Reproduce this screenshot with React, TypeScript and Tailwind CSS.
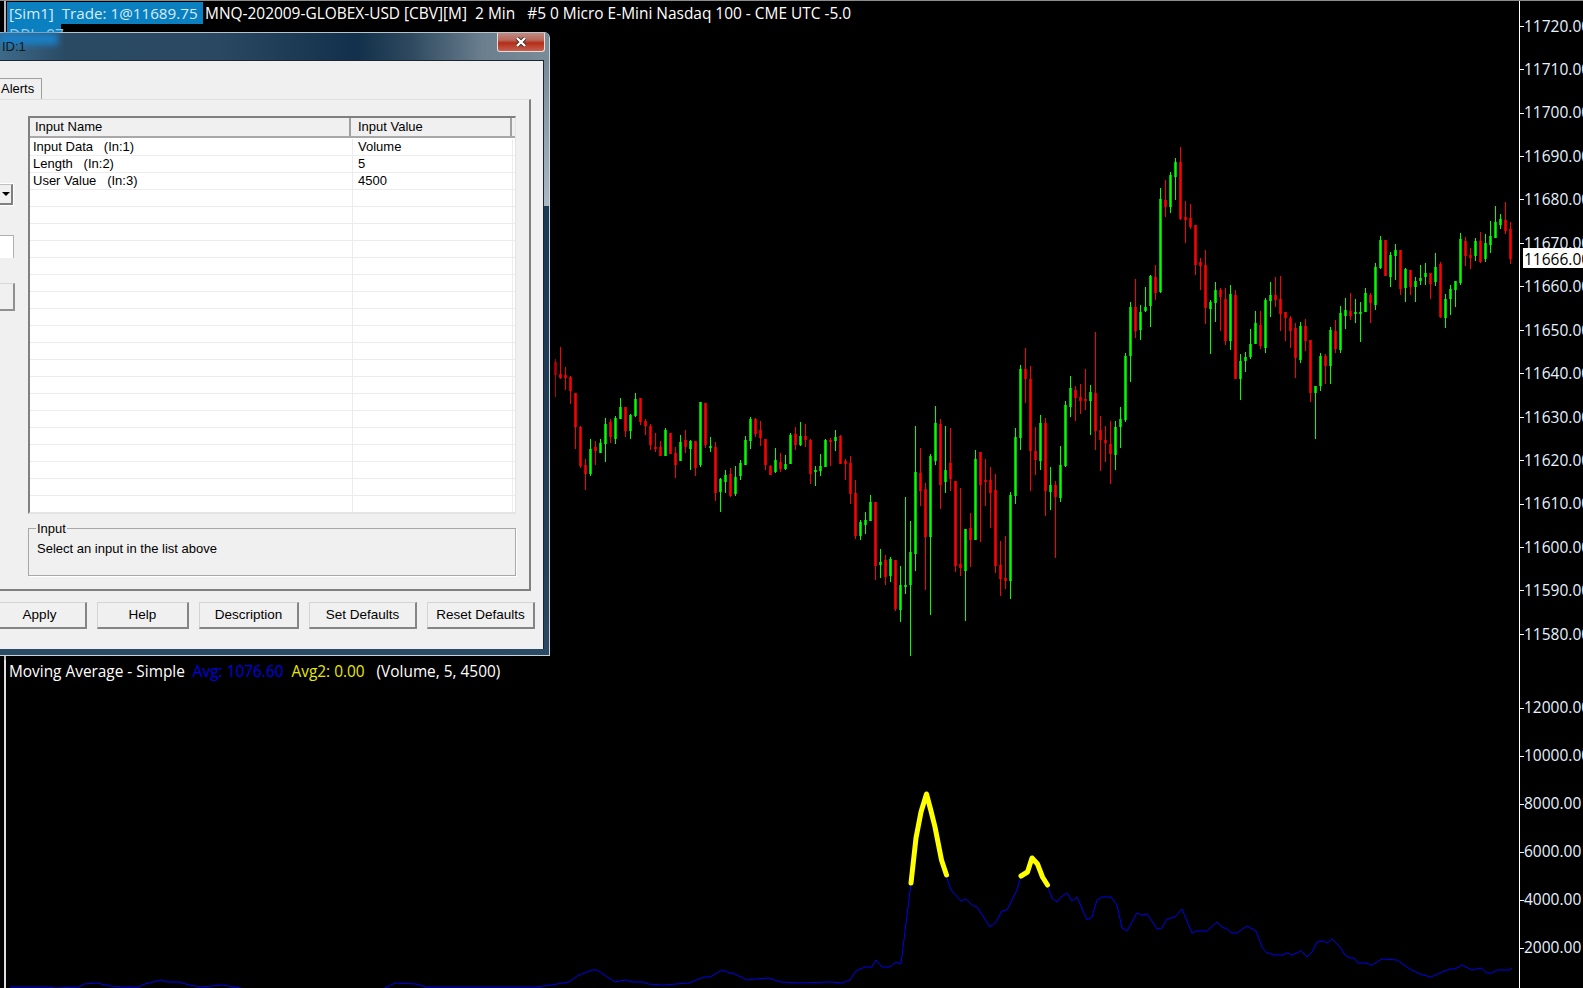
import React from 'react';

type Candle = ['g' | 'r', number, number, number, number];

// [colour, wick top, wick bottom, body top, body bottom], one bar every 5px from x=555
const candles: Candle[] = [
  ['r',359,397,362,375],['r',347,379,374,378],['r',367,390,375,378],['r',376,404,377,391],['r',393,449,393,427],
  ['r',426,468,427,466],['r',459,490,465,474],['g',439,476,449,474],['r',441,465,447,451],['g',439,453,443,453],
  ['g',418,462,424,444],['r',419,443,422,437],['g',416,444,418,439],['g',398,419,407,419],['r',407,437,407,431],
  ['g',414,439,415,431],['g',393,417,399,416],['r',398,425,398,422],['r',419,435,421,426],['r',424,450,426,445],
  ['r',433,452,447,449],['r',441,456,447,456],['g',428,456,430,456],['r',433,454,433,454],['r',447,478,453,465],
  ['g',435,461,442,461],['r',430,453,440,447],['g',440,470,441,449],['r',441,476,441,468],['g',402,467,402,465],
  ['r',403,448,403,445],['g',437,452,446,448],['r',442,501,447,493],['g',478,512,479,492],['g',470,493,475,482],
  ['r',468,497,474,496],['g',466,496,477,494],['g',460,480,463,476],['g',436,465,440,465],['g',417,449,419,441],
  ['r',418,437,419,434],['r',421,446,430,438],['r',439,470,439,465],['r',465,475,466,475],['g',448,473,460,472],
  ['r',453,472,462,469],['g',455,470,464,469],['g',433,464,435,464],['r',427,450,434,445],['g',422,446,436,445],
  ['r',424,447,436,440],['r',439,484,440,474],['g',466,486,470,472],['g',454,476,466,471],['g',439,467,440,467],
  ['r',438,466,440,442],['g',430,451,437,441],['r',435,464,436,464],['r',459,480,461,464],['r',456,504,463,494],
  ['r',480,539,493,536],['g',520,540,522,536],['g',512,534,520,525],['g',495,521,502,521],['r',502,580,502,566],
  ['g',549,578,562,565],['r',555,585,560,577],['g',557,582,559,576],['r',560,611,560,609],['g',566,622,585,610],
  ['g',497,594,585,586],['g',521,656,552,585],['g',426,571,472,554],['r',448,506,473,491],['r',483,590,489,537],
  ['g',454,615,456,537],['g',406,465,423,461],['r',419,509,424,485],['g',426,493,470,482],['r',428,491,463,479],
  ['r',481,572,481,566],['r',488,576,564,568],['g',529,621,529,571],['r',513,567,528,540],['g',450,540,459,540],
  ['r',452,542,452,485],['r',459,506,480,482],['r',467,528,480,493],['r',474,573,490,566],['r',541,596,565,579],
  ['r',536,589,578,581],['g',492,599,495,581],['g',428,504,437,496],['g',365,450,369,438],['r',348,403,369,379],
  ['r',366,491,379,451],['r',427,475,451,460],['g',415,470,423,461],['r',418,516,423,491],['g',467,510,485,492],
  ['r',481,558,485,497],['g',446,502,465,498],['g',401,467,405,466],['g',376,417,388,407],['r',386,421,390,398],
  ['r',384,414,397,401],['r',369,410,399,401],['g',385,435,392,401],['r',332,450,393,431],['r',416,471,430,440],
  ['r',426,462,440,443],['r',421,484,444,454],['g',421,470,427,455],['g',407,448,419,427],['g',353,422,356,420],
  ['g',302,382,307,356],['r',279,338,307,331],['g',305,340,312,330],['g',287,312,307,311],['g',275,327,276,306],
  ['r',265,300,277,293],['g',188,293,199,292],['r',180,217,200,207],['g',172,213,175,207],['g',158,200,162,177],
  ['r',147,220,162,219],['r',201,243,217,220],['r',204,229,218,227],['r',225,275,225,265],['r',258,290,262,266],
  ['r',250,324,265,308],['g',300,354,302,309],['g',282,322,290,303],['r',288,331,290,297],['r',288,345,299,341],
  ['g',285,350,294,341],['r',290,379,295,379],['g',354,400,361,379],['g',352,372,357,361],['g',329,359,344,357],
  ['g',311,344,323,344],['r',311,349,325,346],['g',298,353,300,348],['g',282,317,295,301],['r',277,307,295,300],
  ['r',276,331,299,314],['r',312,341,312,318],['r',316,348,318,331],['r',323,378,328,358],['g',322,363,326,360],
  ['r',319,351,326,341],['r',340,402,340,393],['g',386,439,386,393],['g',353,391,356,386],['r',354,384,356,366],
  ['g',327,384,330,366],['r',320,353,331,349],['g',306,353,313,350],['g',298,329,310,316],['r',293,320,311,316],
  ['g',299,323,312,313],['g',302,342,312,313],['g',288,312,293,312],['r',293,323,295,303],['g',263,310,267,305],
  ['g',236,269,240,268],['r',240,276,240,276],['g',252,287,255,277],['g',244,280,250,256],['r',250,295,250,289],
  ['g',268,302,269,288],['r',270,295,270,287],['g',277,302,281,287],['g',265,285,278,281],['g',263,285,273,277],
  ['r',273,299,273,284],['g',253,286,267,282],['r',262,318,264,317],['g',294,328,299,318],['g',285,315,289,299],
  ['g',281,307,281,290],['g',233,285,239,283],['r',237,266,241,256],['r',248,269,255,258],['g',238,261,241,256],
  ['r',232,263,241,262],['g',234,262,243,259],['g',221,253,236,245],['g',206,238,222,238],['g',214,229,219,225],
  ['r',202,234,220,231],['r',222,264,229,259],
];

// the blue average, broken where the yellow marker was painted over it
const avgLines = [
  '10,987 48,987 55,988 79,987 84,984 97,983 110,986 122,987 138,987 145,984 161,980 168,982 179,982 189,985 201,987 222,985 235,987 245,989 383,989 395,983 416,984 426,987 495,987 536,987 551,985 569,982 577,976 592,970 597,970 615,982 625,980 633,982 643,982 648,984 663,985 689,983 704,977 710,977 722,970 730,973 735,974 747,980 755,979 768,978 781,982 800,983 830,982 842,983 850,980 856,971 865,967 872,967 876,960 882,967 890,967 896,962 901,964 911,883',
  '946,875 951,890 961,901 966,899 972,905 977,907 990,927 996,922 1002,911 1007,910 1017,890 1021,876',
  '1047,885 1052,898 1057,902 1061,897 1067,893 1072,901 1077,897 1087,920 1092,917 1097,900 1102,897 1111,897 1117,905 1122,928 1127,931 1137,913 1142,915 1147,914 1152,921 1157,929 1162,928 1167,919 1175,917 1182,909 1192,933 1197,931 1207,931 1217,922 1222,927 1227,929 1232,933 1237,933 1247,926 1256,931 1262,947 1267,953 1275,955 1282,955 1287,953 1292,955 1301,951 1307,957 1312,952 1317,942 1324,941 1327,943 1332,939 1340,947 1345,955 1350,958 1354,958 1358,963 1366,963 1372,965 1382,959 1397,960 1410,969 1420,974 1431,977 1442,972 1450,969 1455,969 1462,965 1472,970 1481,968 1487,973 1492,973 1497,970 1510,970 1512,968',
];
const markerLines = [
  '911,883 916,838 921,812 926.5,794 931,811 935,827 941.5,860 946.5,875',
  '1021,876 1027.5,872 1032,858 1037.5,864 1042.5,877 1047.5,885',
];

const priceLabels = ['11720.00','11710.00','11700.00','11690.00','11680.00','11670.00','11660.00','11650.00','11640.00','11630.00','11620.00','11610.00','11600.00','11590.00','11580.00'];
const volumeLabels = ['12000.00','10000.00','8000.00','6000.00','4000.00','2000.00'];
const buttons = [
  { label: 'Apply', cls: 'w-[94px]' },
  { label: 'Help', cls: 'w-[92px]' },
  { label: 'Description', cls: 'w-[100px]' },
  { label: 'Set Defaults', cls: 'w-[108px]' },
  { label: 'Reset Defaults', cls: 'w-[108px]' },
];
const inputs: [string, string][] = [
  ['Input Data   (In:1)', 'Volume'],
  ['Length   (In:2)', '5'],
  ['User Value   (In:3)', '4500'],
];

const CandleBars: React.FC = () => (
  <g shapeRendering="crispEdges">
    {candles.map(([c, wt, wb, bt, bb], i) => {
      const x = 555 + i * 5;
      const main = c === 'g' ? '#00ff00' : '#ff0000';
      const edge = c === 'g' ? '#00c000' : '#c80000';
      return (
        <g key={i} opacity={i === 0 ? 0.7 : 1}>
          <rect x={x} y={wt} width={1} height={wb - wt} fill={main} />
          <rect x={x - 1} y={bt} width={3} height={Math.max(bb - bt, 2)} fill={edge} />
          <rect x={x} y={bt} width={1} height={Math.max(bb - bt, 2)} fill={main} />
        </g>
      );
    })}
  </g>
);

const Axis: React.FC<{ labels: string[]; rowClass: string; padClass: string }> = ({ labels, rowClass, padClass }) => (
  <div className={`w-[64px] shrink-0 border-l border-white overflow-hidden text-[15.5px] text-[#e6f2ff] ${padClass}`}>
    {labels.map(l => (
      <div key={l} className={`flex items-center whitespace-nowrap ${rowClass}`}>
        <div className="w-[4px] h-px bg-white shrink-0" />
        <span>{l}</span>
      </div>
    ))}
  </div>
);

const ToolWindow: React.FC = () => (
  <div className="absolute left-0 top-[32px] z-10 w-[550px] h-[624px] flex flex-col rounded-tr-[6px] border-r border-b border-[#c8d4dc] bg-[linear-gradient(180deg,#6e8090_0%,#a8b8c5_27.9%,#1a3a58_28%,#25405a_85%,#2b4a66_100%)] font-['Liberation_Sans',sans-serif] text-[13px] text-black overflow-hidden">
    <div className="relative h-[28px] shrink-0 flex justify-between border-t border-[#b8c4cc] bg-[linear-gradient(90deg,#3d6a8a_0%,#2a4a64_12%,#2b4862_40%,#12304b_65%,#2f4a60_75%,#6b7f8f_88%,#7a8b98_100%)]">
      <div className="absolute left-0 top-0 w-[58px] h-[12px] bg-[#1a7fc4] blur-[3px]" />
      <span className="relative pl-[2px] pt-[4px] text-[#0c1a26]">ID:1</span>
      <div className="relative mr-[4px] w-[48px] h-[19px] flex items-center justify-center rounded-b-[3px] border border-t-0 border-[#e8dcd8] bg-[linear-gradient(180deg,#c08a80_0%,#b8675a_40%,#b52c18_55%,#c4604f_100%)]">
        <svg width="12" height="10" viewBox="0 0 12 10">
          <path d="M2 1 L10 9 M10 1 L2 9" stroke="#3a2a28" strokeWidth="4" />
          <path d="M2 1 L10 9 M10 1 L2 9" stroke="#ffffff" strokeWidth="2.4" />
        </svg>
      </div>
    </div>

    <div className="flex-1 min-h-0 pb-[6px]">
      <div className="w-[544px] h-[589px] border-t border-r border-[#1c2630] bg-[#f0f0f0] pt-[17px]">
        <div className="h-[21px] w-[42px] flex items-center pl-[1px] border-t border-r border-[#a0a0a0] bg-[#f0f0f0]">
          Alerts
        </div>
        <div className="w-[531px] h-[492px] flex border-t border-[#e0e0e0] border-r-2 border-b-2 border-r-[#808080] border-b-[#808080]">
          <div className="w-[28px] shrink-0 pt-[84px]">
            <div className="h-[21px] w-[13px] flex items-center justify-center border-t border-r-2 border-b-2 border-[#808080] border-t-[#c0c0c0] outline outline-white">
              <div className="w-0 h-0 border-x-[4px] border-x-transparent border-t-[4px] border-t-black" />
            </div>
            <div className="mt-[30px] h-[23px] w-[14px] bg-white border-t border-r border-[#b0b0b0]" />
            <div className="mt-[25px] h-[28px] w-[15px] border-t border-r-2 border-b-2 border-[#909090] border-t-[#d8d8d8]" />
          </div>

          <div className="w-[488px] pt-[16px]">
            <div className="h-[398px] flex flex-col bg-white border-t-2 border-l-2 border-[#808080] border-r border-r-[#e4e4e4] border-b-2 border-b-[#e4e4e4] overflow-hidden">
              <div className="h-[20px] shrink-0 flex bg-[#f0f0f0] border-b-2 border-[#a8a8a8] leading-[17px]">
                <div className="w-[321px] pl-[5px] border-r-2 border-[#a0a0a0]">Input Name</div>
                <div className="w-[161px] pl-[7px] border-r-2 border-[#a0a0a0]">Input Value</div>
              </div>
              <div className="h-[1px] shrink-0" />
              {Array.from({ length: 22 }).map((_, i) => (
                <div key={i} className="h-[17px] shrink-0 flex border-b border-[#ececec] leading-[16px] whitespace-pre">
                  <div className="w-[323px] pl-[3px] border-r border-[#ececec]">{inputs[i]?.[0]}</div>
                  <div className="w-[160px] pl-[5px] border-r border-[#ececec]">{inputs[i]?.[1]}</div>
                </div>
              ))}
            </div>
            <div className="relative mt-[14px] h-[48px] border border-[#a8a8a8] pl-[8px] pt-[10px] shadow-[1px_1px_0_#ffffff]">
              <span className="absolute left-[7px] top-[-10px] bg-[#f0f0f0] px-px">Input</span>
              Select an input in the list above
            </div>
          </div>
        </div>

        <div className="mt-[11px] ml-[-7px] flex gap-[10px] h-[27px]">
          {buttons.map(b => (
            <div
              key={b.label}
              className={`${b.cls} shrink-0 flex items-center justify-center border-t border-l border-[#d4d4d4] border-r-2 border-b-2 border-r-[#858585] border-b-[#858585] text-[13.5px]`}
            >
              {b.label}
            </div>
          ))}
        </div>
      </div>
    </div>
  </div>
);

const App: React.FC = () => (
  <div className="relative w-[1583px] h-[988px] bg-black overflow-hidden flex flex-col font-['Open_Sans',sans-serif] text-white">
    {/* price pane */}
    <div className="relative h-[660px] shrink-0 flex border-t border-[#8c8c8c]">
      <div className="ml-[4px] w-[1515px] shrink-0 border-l-2 border-[#b8b8b8]">
        <svg className="block w-[1513px] h-[659px]" viewBox="6 1 1513 659">
          <CandleBars />
        </svg>
      </div>
      <Axis labels={priceLabels} rowClass="h-[43.45px]" padClass="pt-[3.5px]" />

      <div className="absolute left-[7px] top-[1px] text-[15.45px] leading-[22px] whitespace-pre">
        <div className="flex">
          <span className="bg-[#0a80c0] w-[196px] pl-[2px] text-[15.2px] text-[#d8ecfa]">[Sim1]  Trade: 1@11689.75</span>
          <span className="pl-[2px]">MNQ-202009-GLOBEX-USD [CBV][M]  2 Min   #5 0 Micro E-Mini Nasdaq 100 - CME UTC -5.0</span>
        </div>
        <div className="bg-[#0a80c0] w-[54px] pl-[2px] text-[#9cc8e4]">DBL: 97</div>
      </div>
      <div className="absolute right-0 top-[247px] w-[60px] h-[20px] pl-[1px] bg-white text-black text-[15.5px] leading-[23px] overflow-hidden">
        11666.00
      </div>
    </div>

    {/* volume pane */}
    <div className="relative flex-1 min-h-0 flex">
      <div className="ml-[4px] w-[1515px] shrink-0 border-l-2 border-[#e0e0e0]">
        <svg className="block w-[1513px] h-[328px]" viewBox="6 660 1513 328">
          {avgLines.map((pts, i) => (
            <polyline key={i} points={pts} fill="none" stroke="#0000f0" strokeWidth="1" />
          ))}
          {markerLines.map((pts, i) => (
            <polyline
              key={i}
              points={pts}
              fill="none"
              stroke="#ffff00"
              strokeWidth="5"
              strokeLinecap="round"
              strokeLinejoin="round"
            />
          ))}
        </svg>
      </div>
      <Axis labels={volumeLabels} rowClass="h-[48px]" padClass="pt-[24px]" />

      <div className="absolute left-[9px] top-[1px] text-[15.4px] leading-[21px] whitespace-pre">
        <span>Moving Average - Simple  </span>
        <span className="text-[#0000e0]">Avg: 1076.60  </span>
        <span className="text-[#e8e800]">Avg2: 0.00   </span>
        <span>(Volume, 5, 4500)</span>
      </div>
    </div>

    <ToolWindow />
  </div>
);

export default App;
